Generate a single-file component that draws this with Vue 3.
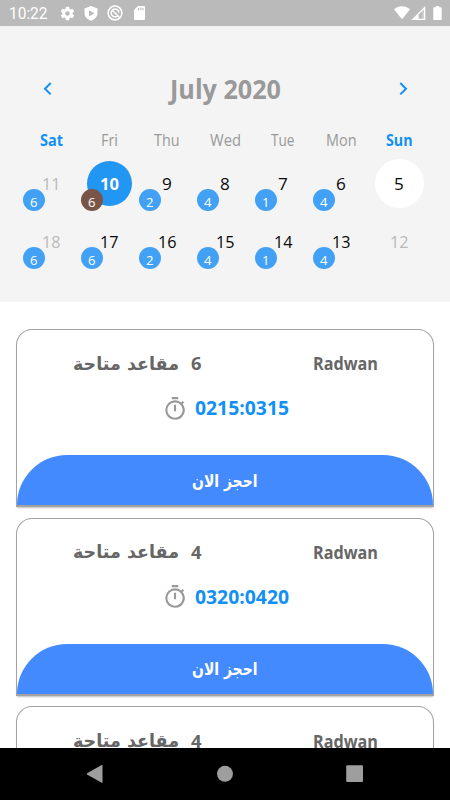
<script setup>
import { h } from 'vue'

// A single line of real text fitted to a given width.
const FitText = (props) =>
  h('svg', { class: 'fit', width: props.w, height: props.size, style: { fontSize: props.size + 'px' } }, [
    h('text', {
      x: props.w / 2, y: props.size * 0.86, 'text-anchor': 'middle',
      textLength: props.w, lengthAdjust: 'spacingAndGlyphs', fill: 'currentColor'
    }, props.text)
  ])
FitText.props = ['text', 'w', 'size']

const weekdays = [
  { t: 'Sat', w: 23, bold: true }, { t: 'Fri', w: 17 }, { t: 'Thu', w: 25.5 }, { t: 'Wed', w: 31 },
  { t: 'Tue', w: 23.5 }, { t: 'Mon', w: 30.5 }, { t: 'Sun', w: 26.5, bold: true }
]
const days = [
  { n: 11, b: 6, dim: true }, { n: 10, b: 6, selected: true }, { n: 9, b: 2 }, { n: 8, b: 4 },
  { n: 7, b: 1 }, { n: 6, b: 4 }, { n: 5, today: true },
  { n: 18, b: 6, dim: true }, { n: 17, b: 6 }, { n: 16, b: 2 }, { n: 15, b: 4 },
  { n: 14, b: 1 }, { n: 13, b: 4 }, { n: 12, dim: true }
]
const slots = [
  { seats: 6, time: '0215:0315' }, { seats: 4, time: '0320:0420' }, { seats: 4, time: '0425:0525' }
]
</script>

<template>
  <div class="screen">
    <header class="status">
      <FitText class="clock" text="10:22" :w="38.5" :size="16" />
      <svg class="gear" width="17" height="17" viewBox="0 0 24 24"><path d="M19.14 12.94c.04-.3.06-.61.06-.94s-.02-.64-.07-.94l2.03-1.58a.49.49 0 0 0 .12-.61l-1.92-3.32a.49.49 0 0 0-.59-.22l-2.39.96a7 7 0 0 0-1.62-.94l-.36-2.54a.48.48 0 0 0-.48-.41h-3.84a.47.47 0 0 0-.47.41l-.36 2.54c-.59.24-1.13.57-1.62.94l-2.39-.96a.47.47 0 0 0-.59.22L2.74 8.87a.47.47 0 0 0 .12.61l2.03 1.58c-.05.3-.09.63-.09.94s.02.64.07.94l-2.03 1.58a.49.49 0 0 0-.12.61l1.92 3.32c.12.22.37.29.59.22l2.39-.96c.5.38 1.03.7 1.62.94l.36 2.54c.05.24.24.41.48.41h3.84c.24 0 .44-.17.47-.41l.36-2.54c.59-.24 1.13-.56 1.62-.94l2.39.96c.22.08.47 0 .59-.22l1.92-3.32a.47.47 0 0 0-.12-.61zM12 15.2a3.2 3.2 0 1 1 0-6.4 3.2 3.2 0 0 1 0 6.4z" /></svg>
      <svg class="shield" width="14" height="15" viewBox="0 0 14 15"><path fill-rule="evenodd" d="M7 0l6.500 2.400v4.800c0 3.600-2.800 6.200-6.500 7.600C3.300 13.400.5 10.800.5 7.200V2.400zM5 4.200v6.200L10.400 7.300z" /></svg>
      <svg class="ring" width="16" height="16" viewBox="0 0 16 16"><circle cx="8" cy="8" r="6.900" /><path d="M10.700 10.800A3.900 3.900 0 1 1 11.900 7.600M5.800 5.800L12.300 12.300" /></svg>
      <svg class="card-icon" width="11" height="14" viewBox="0 0 11 14"><path fill-rule="evenodd" d="M4 0h6a1 1 0 0 1 1 1v12a1 1 0 0 1-1 1H1a1 1 0 0 1-1-1V4zM4 1.800v2.500h1.100V1.800zM6.200 1.800v2.500h1.100V1.800zM8.400 1.800v2.500h1.100V1.800z" /></svg>
      <span class="spacer"></span>
      <svg width="16" height="14" viewBox="0 0 16 14"><path d="M0 3.200C4.600-.9 11.400-.9 16 3.200L8 13.200z" /></svg>
      <svg class="signal" width="15" height="14" viewBox="0 0 15 14"><path fill-rule="evenodd" d="M14.300 0v14H.3zM13 3.200L7.600 8.600v4.100H13z" /><path class="faint" d="M13 3.200v9.500h-2V5.200z" /></svg>
      <svg class="battery" width="9" height="14" viewBox="0 0 9 14"><path d="M2.800 0h3.400v1.300H8a.7.7 0 0 1 .7.7v11.300a.7.7 0 0 1-.7.7H1a.7.7 0 0 1-.7-.7V2a.7.7 0 0 1 .7-.7h1.800z" /></svg>
    </header>

    <section class="calendar">
      <div class="month">
        <svg class="chevron" width="9" height="14" viewBox="0 0 9 14"><path d="M7.700 1L2 6.700l5.700 5.700" /></svg>
        <FitText class="title" text="July 2020" :w="111" :size="26.500" />
        <svg class="chevron" width="9" height="14" viewBox="0 0 9 14"><path d="M1.300 1L7 6.700l-5.700 5.700" /></svg>
      </div>
      <div class="grid weekdays">
        <span v-for="d in weekdays" :key="d.t" class="weekday" :class="{ bold: d.bold }">
          <FitText :text="d.t" :w="d.w" :size="16.500" />
        </span>
      </div>
      <div class="grid">
        <div v-for="d in days" :key="d.n" class="day" :class="{ dim: d.dim, selected: d.selected, today: d.today }">
          <span class="disc"><FitText :text="d.n" :w="d.n > 9 ? (d.selected ? 19 : 18.500) : 9.800" :size="16.500" /></span>
          <span v-if="d.b" class="badge"><FitText :text="d.b" :w="7.500" :size="13" /></span>
        </div>
      </div>
    </section>

    <main class="slots">
      <article v-for="(s, i) in slots" :key="i" class="slot">
        <div class="info">
          <FitText class="arabic" text="مقاعد متاحة" :w="106" :size="18" />
          <FitText class="seats" :text="s.seats" :w="10.500" :size="18.500" />
          <FitText class="name" text="Radwan" :w="65" :size="18.500" />
        </div>
        <div class="time">
          <svg width="26" height="26" viewBox="0 0 24 24"><path d="M15 1H9v2h6V1zm-4 13h2V8h-2v6zm8.030-6.610l1.420-1.420c-.43-.51-.9-.99-1.410-1.410l-1.420 1.420A8.962 8.962 0 0 0 12 4a9 9 0 0 0 0 18 8.994 8.994 0 0 0 7.030-14.610zM12 20c-3.870 0-7-3.130-7-7s3.130-7 7-7 7 3.130 7 7-3.130 7-7 7z" /></svg>
          <FitText class="hours" :text="s.time" :w="94" :size="19" />
        </div>
        <button class="book"><FitText class="arabic" text="احجز الان" :w="65.500" :size="17" /></button>
      </article>
    </main>

    <nav class="nav">
      <svg width="18" height="20" viewBox="0 0 18 20"><path d="M16.500 1.200v17.200a.5.5 0 0 1-.8.400L1 10.400a.7.7 0 0 1 0-1.100L15.700.9a.5.5 0 0 1 .8.300z" /></svg>
      <svg width="18" height="20" viewBox="0 0 18 20"><circle cx="9" cy="9.800" r="8" /></svg>
      <svg width="18" height="20" viewBox="0 0 18 20"><rect x=".2" y="1.300" width="16.800" height="16.800" rx="1" /></svg>
    </nav>
  </div>
</template>

<style>
body { margin: 0; overflow: hidden; }
</style>

<style scoped>
.screen { width: 450px; height: 800px; display: flex; flex-direction: column; overflow: hidden; background: #fff; font-family: "Open Sans", "Noto Sans", sans-serif; }
svg { display: block; flex: none; }
.fit { overflow: visible; display: block; flex: none; }
.status { height: 26px; flex: none; background: #bababa; display: flex; align-items: center; padding: 0 8px 0 9px; box-sizing: border-box; }
.status svg { fill: #fff; }
.clock { font-family: Roboto, sans-serif; font-weight: 400; color: #fff; }
.gear { margin-left: 11px; }
.shield { margin-left: 8.500px; }
.status .ring { margin-left: 9px; fill: none; stroke: #fff; stroke-width: 1.500; }
.card-icon { margin-left: 11px; }
.spacer { flex: 1; }
.signal { margin-left: 1px; }
.faint { fill: #fff; opacity: .3; }
.battery { margin-left: 7px; }
.calendar { height: 276px; flex: none; background: #f4f4f4; padding: 0 22px; box-sizing: border-box; }
.month { display: flex; align-items: center; justify-content: space-between; height: 98px; padding: 28px 20px 0 21px; box-sizing: border-box; }
.chevron { fill: none; stroke: #1290f5; stroke-width: 2; }
.title { color: #999; font-weight: 700; padding-top: 1px; }
.grid { display: grid; grid-template-columns: repeat(7, 58px); }
.weekdays { height: 30px; }
.weekday { display: flex; justify-content: center; align-items: center; height: 30px; padding-top: 2px; box-sizing: border-box; color: #999; font-weight: 400; }
.weekday.bold { color: #1290f5; font-weight: 700; }
.day { height: 58px; display: flex; align-items: center; justify-content: center; position: relative; color: #080808; font-weight: 400; }
.day.dim { color: #bababa; }
.disc { width: 45px; height: 45px; padding-top: 2px; box-sizing: border-box; border-radius: 50%; display: flex; align-items: center; justify-content: center; }
.selected .disc { background: #2196f3; color: #fff; font-weight: 700; }
.today .disc { width: 49px; height: 49px; background: #fff; }
.badge { position: absolute; left: 1px; top: 35px; width: 22px; height: 22px; border-radius: 50%; background: #42a1f5; color: #fff; display: flex; align-items: center; justify-content: center; padding-top: 4px; box-sizing: border-box; }
.selected .badge { background: #795548; }
.slots { flex: 1; min-height: 0; overflow: hidden; padding: 27px 16px 0; display: flex; flex-direction: column; gap: 10.700px; }
.slot { height: 178px; flex: none; box-sizing: border-box; border: 1px solid #a2a2a2; border-bottom-width: 2px; border-radius: 16px 16px 0 0; box-shadow: 0 2px 2px -1px rgba(0, 0, 0, .25); display: flex; flex-direction: column; background: #fff; }
.info { display: flex; align-items: center; height: 67px; padding: 0 55px 0 56px; box-sizing: border-box; color: #666; font-weight: 700; }
.arabic { font-family: "DejaVu Sans", sans-serif; font-weight: 700; }
.seats { margin-left: 12px; }
.name { margin-left: auto; }
.time { display: flex; align-items: center; gap: 7px; height: 26px; padding-left: 145px; margin-bottom: auto; color: #1290f5; font-weight: 700; margin-top: -1.500px; }
.time svg:first-child { fill: #999; }
.book { height: 50px; border: 0; padding: 0; border-radius: 50px 50px 0 0; background: #448aff; color: #fff; display: flex; align-items: center; justify-content: center; }
.nav { height: 52px; flex: none; background: #000; display: flex; align-items: center; justify-content: space-between; padding: 0 86px; box-sizing: border-box; }
.nav svg { fill: #9e9e9e; }
</style>
